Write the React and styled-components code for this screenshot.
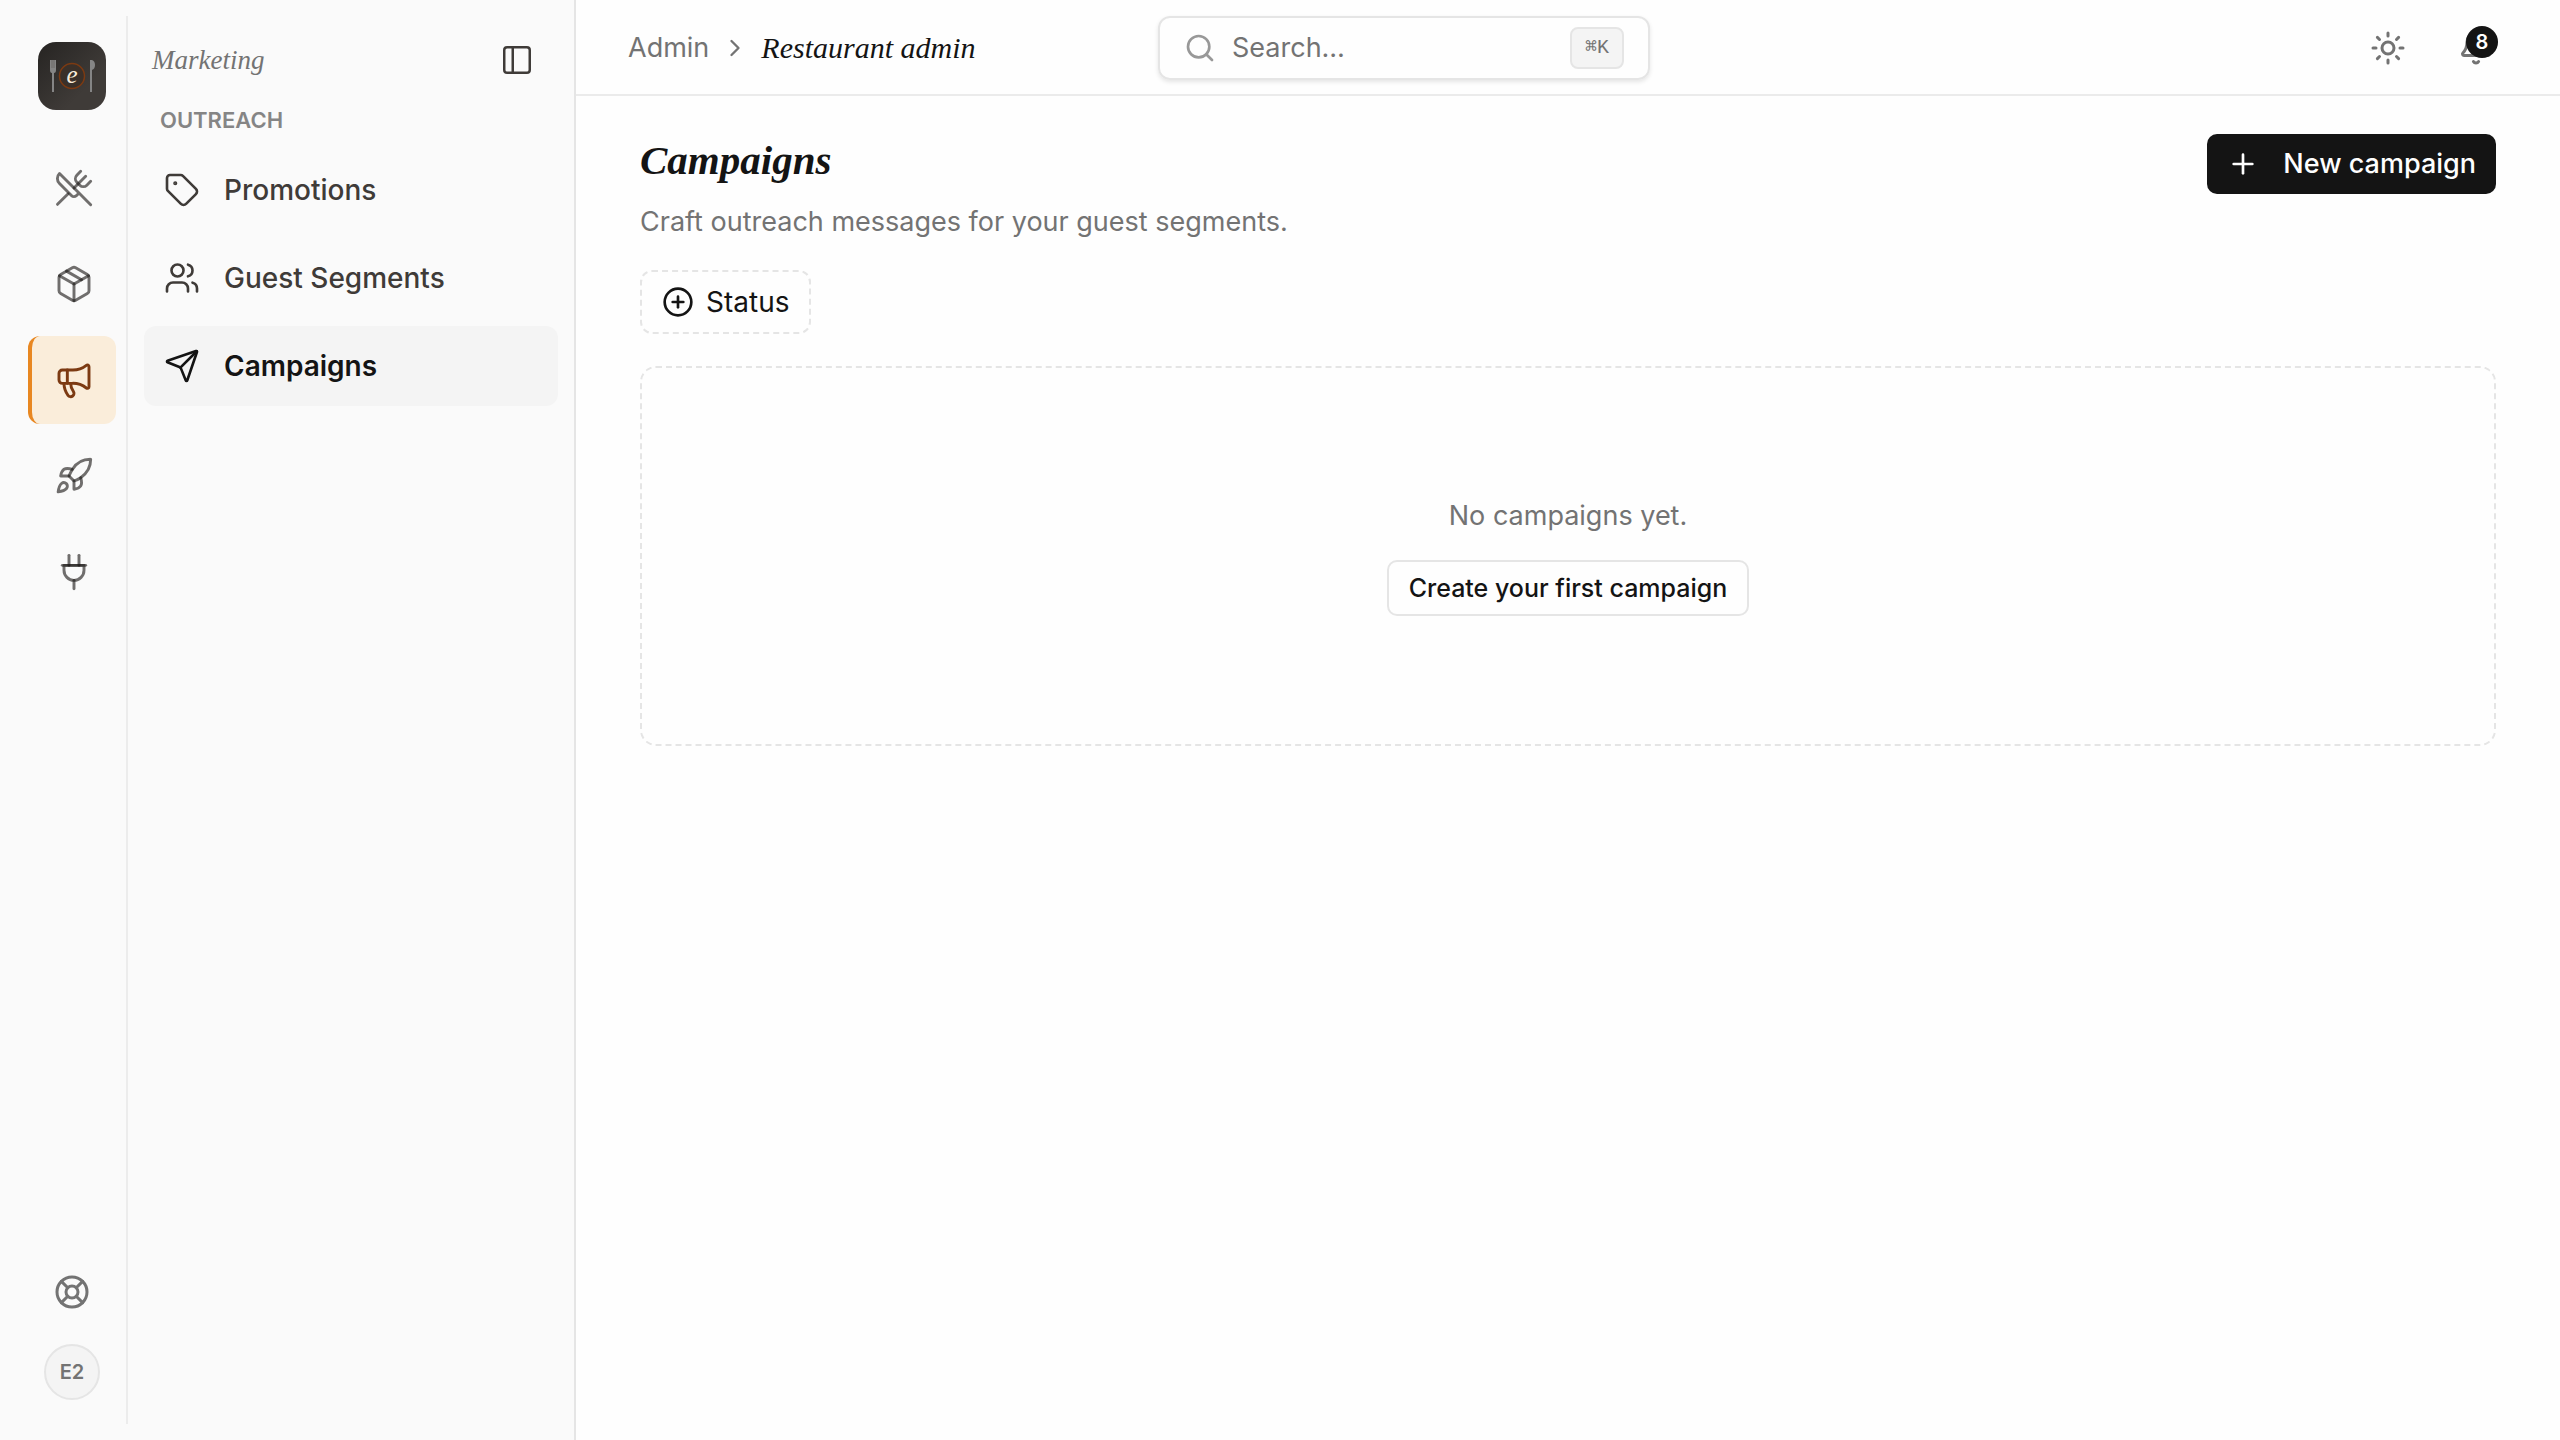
import React, { useState } from "react";
import styled, { createGlobalStyle } from "styled-components";
import {
  Bell,
  ChevronRight,
  CirclePlus,
  LifeBuoy,
  Megaphone,
  Package,
  PanelLeft,
  Plug2,
  Plus,
  Rocket,
  Search,
  Send,
  Sun,
  Tag,
  Users,
  UtensilsCrossed,
} from "lucide-react";

const GlobalStyle = createGlobalStyle`
  * {
    box-sizing: border-box;
  }

  body {
    margin: 0;
    background: #fefefe;
    color: #141414;
    font-family: Inter, "Liberation Sans", sans-serif;
    font-size: 27px;
    line-height: 40px;
  }

  button,
  input {
    font: inherit;
    color: inherit;
  }

  h1,
  h2,
  p {
    margin: 0;
  }

  a {
    color: inherit;
    text-decoration: none;
  }

  svg {
    flex-shrink: 0;
  }
`;

const Page = styled.div`
  display: flex;
  min-height: 100vh;
`;

const Sidebar = styled.aside`
  display: flex;
  flex: 0 0 576px;
  padding: 16px 0 16px 16px;
  background: #fafafa;
  border-right: 2px solid #e5e5e5;
`;

const Rail = styled.nav`
  display: flex;
  flex-direction: column;
  align-items: center;
  flex: 0 0 112px;
  padding: 26px 0 24px 2px;
  border-right: 2px solid #ececec;
`;

const RailLinks = styled.div`
  display: flex;
  flex-direction: column;
  gap: 8px;
  margin: 34px 0 auto;
`;

const RailLink = styled.a`
  display: flex;
  align-items: center;
  justify-content: center;
  width: 88px;
  height: 88px;
  border-left: 4px solid ${(props) => (props.$active ? "#e88721" : "transparent")};
  border-radius: 12px;
  background: ${(props) => (props.$active ? "#faedda" : "transparent")};
  color: ${(props) => (props.$active ? "#7c3a12" : "rgba(28, 25, 23, 0.62)")};
`;

const HelpLink = styled.a`
  display: flex;
  margin-bottom: 34px;
  color: #737373;
`;

const Avatar = styled.button`
  width: 56px;
  height: 56px;
  padding: 0;
  border: 2px solid #e5e5e5;
  border-radius: 50%;
  background: #f4f4f4;
  color: #737373;
  font-size: 20px;
  font-weight: 600;
  line-height: 28px;
`;

const Panel = styled.div`
  flex: 1;
  padding: 20px 16px;
`;

const PanelHeader = styled.div`
  display: flex;
  align-items: center;
  justify-content: space-between;
  height: 48px;
  padding: 0 24px 0 8px;
`;

const PanelTitle = styled.h2`
  color: #737373;
  font-family: "Liberation Serif", serif;
  font-size: 27px;
  font-style: italic;
  font-weight: 400;
`;

const IconButton = styled.button`
  display: flex;
  position: relative;
  padding: 0;
  border: none;
  background: none;
  color: ${(props) => (props.$dark ? "#3f3b38" : "#737373")};
  cursor: pointer;
`;

const GroupLabel = styled.p`
  padding: 20px 16px 14px;
  color: #858585;
  font-size: 22px;
  font-weight: 600;
  line-height: 32px;
`;

const MenuList = styled.nav`
  display: flex;
  flex-direction: column;
  gap: 8px;
`;

const MenuLink = styled.a`
  display: flex;
  align-items: center;
  gap: 24px;
  height: 80px;
  padding: 0 20px;
  border-radius: 12px;
  background: ${(props) => (props.$active ? "#f4f4f4" : "transparent")};
  color: ${(props) => (props.$active ? "#141414" : "#3f3b38")};
  font-size: 28px;
  font-weight: ${(props) => (props.$active ? 600 : 500)};
`;

const Main = styled.div`
  flex: 1;
  min-width: 0;
`;

const TopBar = styled.header`
  display: flex;
  align-items: center;
  height: 96px;
  padding: 2px 66px 0 52px;
  border-bottom: 2px solid #ebebeb;
`;

const Crumbs = styled.nav`
  display: flex;
  align-items: center;
  flex: 0 0 530px;
  gap: 12px;
  color: #737373;
`;

const CurrentCrumb = styled.span`
  color: #141414;
  font-family: "Liberation Serif", serif;
  font-size: 30px;
  font-style: italic;
`;

const SearchBox = styled.label`
  display: flex;
  align-items: center;
  flex: 0 1 492px;
  min-width: 0;
  height: 64px;
  gap: 16px;
  padding: 0 24px;
  border: 2px solid #e5e5e5;
  border-radius: 12px;
  box-shadow: 0 2px 4px rgba(0, 0, 0, 0.1);
  color: #989898;
`;

const SearchInput = styled.input`
  flex: 1;
  min-width: 0;
  padding: 0;
  border: none;
  outline: none;
  background: none;
  color: #141414;

  &::placeholder {
    color: #737373;
    opacity: 1;
  }
`;

const Shortcut = styled.kbd`
  width: 54px;
  height: 42px;
  border: 2px solid #e5e5e5;
  border-radius: 8px;
  background: #f4f4f4;
  color: #737373;
  font-family: "Liberation Mono", "DejaVu Sans Mono", monospace;
  font-size: 20px;
  line-height: 38px;
  text-align: center;
`;

const TopActions = styled.div`
  display: flex;
  gap: 52px;
  margin-left: auto;
`;

const Badge = styled.span`
  position: absolute;
  top: -4px;
  right: -4px;
  width: 32px;
  height: 32px;
  border-radius: 50%;
  background: #141414;
  color: #fefefe;
  font-size: 20px;
  font-weight: 600;
  line-height: 32px;
  text-align: center;
`;

const Content = styled.main`
  padding: 38px 64px;
`;

const PageHeader = styled.div`
  display: flex;
  align-items: flex-start;
  justify-content: space-between;
`;

const Title = styled.h1`
  font-family: "Liberation Serif", serif;
  font-size: 41px;
  font-style: italic;
  font-weight: 700;
  line-height: 52px;
`;

const Muted = styled.p`
  color: #737373;
`;

const Subtitle = styled(Muted)`
  margin-top: 16px;
`;

const Button = styled.button`
  display: flex;
  align-items: center;
  height: 60px;
  gap: 24px;
  padding: 0 20px;
  border: none;
  border-radius: 10px;
  background: #141414;
  color: #fefefe;
  font-weight: 500;
  cursor: pointer;
`;

const OutlineButton = styled(Button)`
  height: 56px;
  border: 2px solid #e5e5e5;
  background: #fefefe;
  color: #141414;
  font-size: 25px;
`;

const FilterButton = styled(Button)`
  height: 64px;
  gap: 12px;
  margin: 28px 0 32px;
  border: 2px dashed #e5e5e5;
  border-radius: 12px;
  background: none;
  color: #141414;
  font-size: 28px;
  font-weight: 400;
`;

const EmptyState = styled.section`
  display: flex;
  flex-direction: column;
  align-items: center;
  gap: 24px;
  padding: 128px 32px;
  border: 2px dashed #e5e5e5;
  border-radius: 16px;
`;

const railItems = [
  { label: "Restaurant", Icon: UtensilsCrossed },
  { label: "Inventory", Icon: Package },
  { label: "Marketing", Icon: Megaphone },
  { label: "Launch", Icon: Rocket },
  { label: "Integrations", Icon: Plug2 },
];

const menuItems = [
  { label: "Promotions", Icon: Tag },
  { label: "Guest Segments", Icon: Users },
  { label: "Campaigns", Icon: Send },
];

const Logo = () => (
  <svg width="68" height="68" viewBox="0 0 68 68" role="img" aria-label="Home">
    <defs>
      <linearGradient id="logoShade" x1="0" y1="0" x2="0.7" y2="0.7">
        <stop offset="0" stopColor="#262422" />
        <stop offset="1" stopColor="#3f3b38" />
      </linearGradient>
    </defs>
    <rect width="68" height="68" rx="18" fill="url(#logoShade)" />
    <g fill="#858585">
      <path d="M12 18h6v10q0 3-2 3v19h-2V31q-2 0-2-3z" />
      <path d="M52 18h2q3 1 3 5t-3 5v22h-2z" />
    </g>
    <path d="M14 18v8M16 18v8" stroke="#5b5754" strokeWidth="0.6" />
    <circle cx="34" cy="34" r="12.5" fill="#3a3029" stroke="#7c3a12" strokeWidth="1.5" />
    <text
      x="34"
      y="41"
      textAnchor="middle"
      fill="#f7ecdc"
      fontFamily="Liberation Serif, serif"
      fontStyle="italic"
      fontSize="25"
    >
      e
    </text>
  </svg>
);

const App = () => {
  const [query, setQuery] = useState("");

  return (
    <Page>
      <GlobalStyle />
      <Sidebar>
        <Rail aria-label="Sections">
          <Logo />
          <RailLinks>
            {railItems.map(({ label, Icon }) => (
              <RailLink key={label} href="#" aria-label={label} $active={label === "Marketing"}>
                <Icon size={40} strokeWidth={1.75} />
              </RailLink>
            ))}
          </RailLinks>
          <HelpLink href="#" aria-label="Help">
            <LifeBuoy size={36} strokeWidth={2} />
          </HelpLink>
          <Avatar>E2</Avatar>
        </Rail>
        <Panel>
          <PanelHeader>
            <PanelTitle>Marketing</PanelTitle>
            <IconButton $dark aria-label="Toggle sidebar">
              <PanelLeft size={34} strokeWidth={1.75} />
            </IconButton>
          </PanelHeader>
          <GroupLabel>OUTREACH</GroupLabel>
          <MenuList aria-label="Outreach">
            {menuItems.map(({ label, Icon }) => (
              <MenuLink key={label} href="#" $active={label === "Campaigns"}>
                <Icon size={36} strokeWidth={1.75} />
                {label}
              </MenuLink>
            ))}
          </MenuList>
        </Panel>
      </Sidebar>
      <Main>
        <TopBar>
          <Crumbs aria-label="Breadcrumb">
            <a href="#">Admin</a>
            <ChevronRight size={28} strokeWidth={2} />
            <CurrentCrumb>Restaurant admin</CurrentCrumb>
          </Crumbs>
          <SearchBox>
            <Search size={32} strokeWidth={2} />
            <SearchInput
              aria-label="Search"
              placeholder="Search…"
              value={query}
              onChange={(e) => setQuery(e.target.value)}
            />
            <Shortcut>⌘K</Shortcut>
          </SearchBox>
          <TopActions>
            <IconButton aria-label="Toggle theme">
              <Sun size={36} strokeWidth={2} />
            </IconButton>
            <IconButton aria-label="Notifications">
              <Bell size={36} strokeWidth={2} />
              <Badge>8</Badge>
            </IconButton>
          </TopActions>
        </TopBar>
        <Content>
          <PageHeader>
            <div>
              <Title>Campaigns</Title>
              <Subtitle>Craft outreach messages for your guest segments.</Subtitle>
            </div>
            <Button>
              <Plus size={32} strokeWidth={2} />
              New campaign
            </Button>
          </PageHeader>
          <FilterButton>
            <CirclePlus size={32} strokeWidth={2} />
            Status
          </FilterButton>
          <EmptyState>
            <Muted>No campaigns yet.</Muted>
            <OutlineButton>Create your first campaign</OutlineButton>
          </EmptyState>
        </Content>
      </Main>
    </Page>
  );
};

export default App;
